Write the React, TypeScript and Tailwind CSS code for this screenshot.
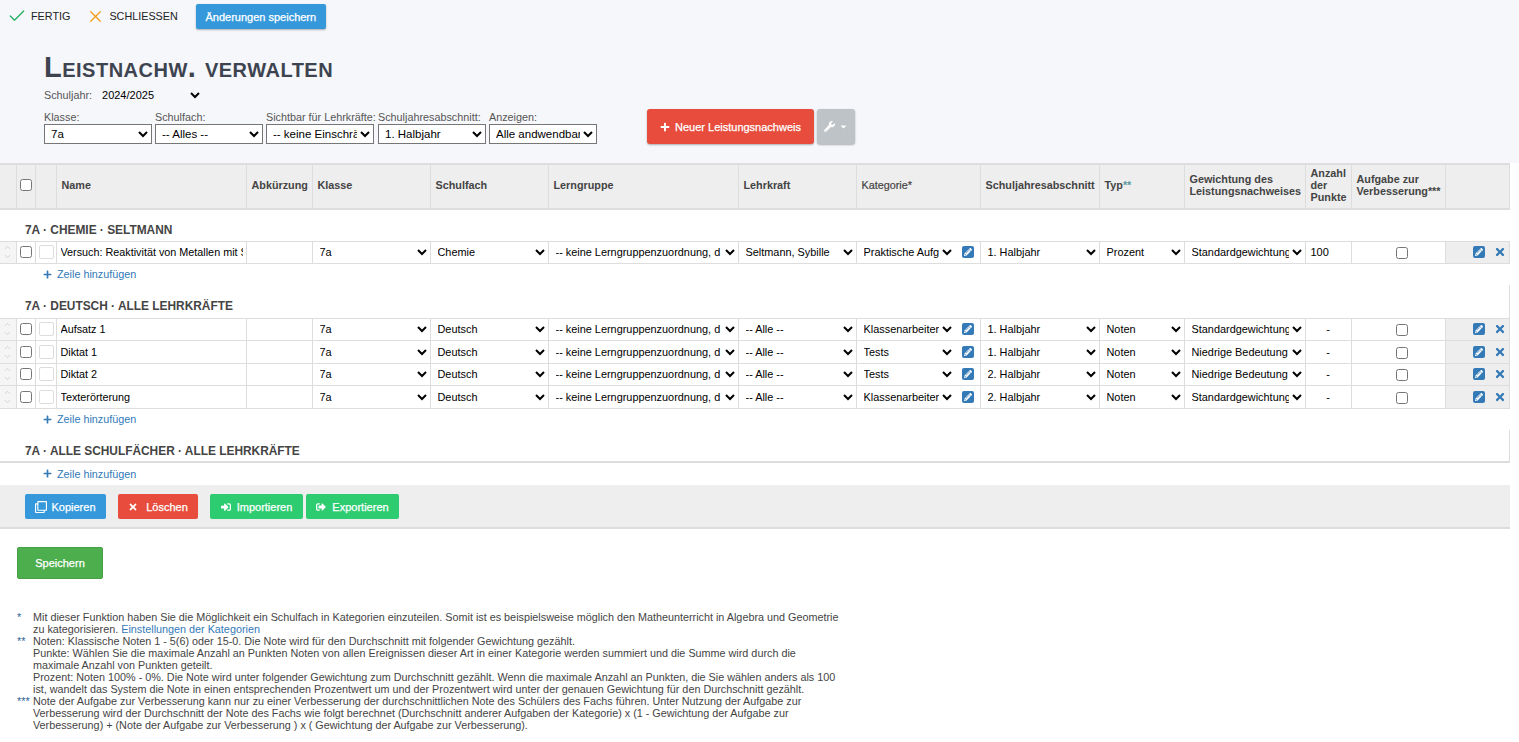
import React from "react";
import { Check, X, ChevronUp, ChevronDown } from "lucide-react";
import { FaPlus, FaWrench, FaTimes, FaSignInAlt, FaSignOutAlt, FaRegClone, FaPencilAlt, FaCaretDown } from "react-icons/fa";

const FONT = "font-['Liberation_Sans',Arial,sans-serif]";

const widths = [16, 19, 21, 190, 66, 118, 118, 190, 118, 124, 119, 85, 121, 46, 94, 64];

const headers: { label: React.ReactNode; cls?: string }[] = [
  { label: "" },
  { label: <input type="checkbox" className="block w-[12px] h-[12px] m-0 -ml-[2px]" /> },
  { label: "" },
  { label: "Name", cls: "font-bold" },
  { label: "Abkürzung", cls: "font-bold" },
  { label: "Klasse", cls: "font-bold" },
  { label: "Schulfach", cls: "font-bold" },
  { label: "Lerngruppe", cls: "font-bold" },
  { label: "Lehrkraft", cls: "font-bold" },
  { label: "Kategorie*", cls: "font-normal [-webkit-text-stroke:0.2px_#444]" },
  { label: "Schuljahresabschnitt", cls: "font-bold" },
  { label: <>Typ<span className="text-[#5b9aa0]">**</span></>, cls: "font-bold" },
  { label: <>Gewichtung des Leistungsnachweises</>, cls: "font-bold" },
  { label: <>Anzahl der Punkte</>, cls: "font-bold" },
  { label: <>Aufgabe zur Verbesserung***</>, cls: "font-bold" },
  { label: "" },
];

type Row = {
  name: string;
  fach: string;
  lehrkraft: string;
  kategorie: string;
  halbjahr: string;
  typ: string;
  gewichtung: string;
  punkte: string;
};

const chemie: Row[] = [
  { name: "Versuch: Reaktivität von Metallen mit Säuren", fach: "Chemie", lehrkraft: "Seltmann, Sybille", kategorie: "Praktische Aufgaben", halbjahr: "1. Halbjahr", typ: "Prozent", gewichtung: "Standardgewichtung", punkte: "100" },
];

const deutsch: Row[] = [
  { name: "Aufsatz 1", fach: "Deutsch", lehrkraft: "-- Alle --", kategorie: "Klassenarbeiten", halbjahr: "1. Halbjahr", typ: "Noten", gewichtung: "Standardgewichtung", punkte: "-" },
  { name: "Diktat 1", fach: "Deutsch", lehrkraft: "-- Alle --", kategorie: "Tests", halbjahr: "1. Halbjahr", typ: "Noten", gewichtung: "Niedrige Bedeutung", punkte: "-" },
  { name: "Diktat 2", fach: "Deutsch", lehrkraft: "-- Alle --", kategorie: "Tests", halbjahr: "2. Halbjahr", typ: "Noten", gewichtung: "Niedrige Bedeutung", punkte: "-" },
  { name: "Texterörterung", fach: "Deutsch", lehrkraft: "-- Alle --", kategorie: "Klassenarbeiten", halbjahr: "2. Halbjahr", typ: "Noten", gewichtung: "Standardgewichtung", punkte: "-" },
];

const CellSelect = ({ value }: { value: string }) => (
  <select
    defaultValue={value}
    className={`block w-full h-[20px] bg-transparent text-[10.9px] text-black outline-none border-0 ${FONT}`}
  >
    <option>{value}</option>
  </select>
);

const TopSelect = ({ label, value }: { label: string; value: string }) => (
  <div className="flex flex-col w-[108px]">
    <label className="text-[10.8px] leading-[12px] text-[#555] whitespace-nowrap h-[12px]">{label}</label>
    <select defaultValue={value} className="w-[108px] h-[20px] mt-[1px] border border-[#767676] bg-white text-[11.5px] text-black pl-[2px]">
      <option>{value}</option>
    </select>
  </div>
);

const AddRow = () => (
  <tr>
    <td colSpan={16} className="h-[22px] p-0 pl-[43px] align-middle">
      <span className="inline-flex items-center gap-[5px] text-[10.8px] leading-[14px] text-[#337ab7]">
        <FaPlus className="text-[#337ab7] w-[9px] h-[9px]" />
        Zeile hinzufügen
      </span>
    </td>
  </tr>
);

const SectionHead = ({ title, rowCls, pad, border }: { title: string; rowCls: string; pad: string; border?: boolean }) => (
  <tr>
    <td colSpan={16} className={`p-0 pl-[25px] align-bottom ${rowCls} ${border ? "border-r border-[#ddd]" : ""}`}>
      <div className={`text-[11.9px] font-bold leading-[14px] text-[#444] ${pad}`}>{title}</div>
    </td>
  </tr>
);

const PencilBox = () => (
  <span className="w-[12px] h-[12px] shrink-0 rounded-[2px] bg-[#337ab7] flex items-center justify-center">
    <FaPencilAlt className="w-[8px] h-[8px] text-white" />
  </span>
);

const TableRow = ({ row, rowCls }: { row: Row; rowCls: string }) => {
  const td = "p-0 pl-[3px] border-r border-t border-b border-[#ddd] align-middle";
  return (
    <tr className={rowCls}>
      <td className="p-0 border-r border-t border-b border-[#ddd] bg-[#f5f5f5] text-center">
        <div className="flex flex-col items-center text-[#bbb] leading-none">
          <ChevronUp size={9} strokeWidth={1.5} />
          <ChevronDown size={9} strokeWidth={1.5} />
        </div>
      </td>
      <td className={td}>
        <input type="checkbox" className="block w-[12px] h-[12px] m-0" />
      </td>
      <td className={td}>
        <div className="w-[15px] h-[14px] border border-[#ddd] rounded-[2px] bg-white" />
      </td>
      <td className="p-0 border-r border-t border-b border-[#ddd]">
        <input
          readOnly
          defaultValue={row.name}
          className="block w-full h-[20px] pl-[4px] pr-[3px] bg-transparent text-[10.8px] text-black outline-none"
        />
      </td>
      <td className={td} />
      <td className={td}><CellSelect value="7a" /></td>
      <td className={td}><CellSelect value={row.fach} /></td>
      <td className={td}><CellSelect value="-- keine Lerngruppenzuordnung, d" /></td>
      <td className={td}><CellSelect value={row.lehrkraft} /></td>
      <td className={td}>
        <div className="flex items-center">
          <div className="w-[95px] shrink-0"><CellSelect value={row.kategorie} /></div>
          <span className="ml-[7px]"><PencilBox /></span>
        </div>
      </td>
      <td className={td}><CellSelect value={row.halbjahr} /></td>
      <td className={td}><CellSelect value={row.typ} /></td>
      <td className={td}><CellSelect value={row.gewichtung} /></td>
      <td className={`p-0 border-r border-t border-b border-[#ddd] text-[11px] text-black ${row.punkte === "-" ? "text-center" : "pl-[5px]"}`}>{row.punkte}</td>
      <td className="p-0 pl-[8px] border-r border-t border-b border-[#ddd] align-middle text-center">
        <input type="checkbox" className="inline-block align-middle w-[12px] h-[12px] m-0" />
      </td>
      <td className="p-0 border-r border-t border-b border-[#ddd] bg-[#eee]">
        <div className="flex items-center justify-end gap-[9px] pr-[3px]">
          <PencilBox />
          <FaTimes className="w-[12px] h-[12px] text-[#337ab7]" />
        </div>
      </td>
    </tr>
  );
};

const FootButton = ({ color, icon, label, width, gap }: { color: string; icon: React.ReactNode; label: string; width: string; gap: string }) => (
  <button className={`${color} ${width} ${gap} h-[25px] rounded-[2px] text-white text-[11px] [-webkit-text-stroke:0.25px_white] flex items-center justify-center`}>
    {icon}
    {label}
  </button>
);

const Note = ({ mark, children }: { mark: string; children: React.ReactNode }) => (
  <div className="flex">
    <div className="w-[16px] shrink-0 text-[#2a6496]">{mark}</div>
    <div className="flex-1">{children}</div>
  </div>
);

export default function App() {
  return (
    <div className={`${FONT} bg-white h-[742px] w-[1519px] overflow-hidden text-[#333] text-[11px] leading-[14px]`}>
      {/* top area */}
      <div className="bg-[#f5f7fa] h-[163px]">
        <div className="flex items-start pt-[4px] pl-[7px]">
          <div className="flex items-center h-[24px] text-[10.8px] text-[#222]">
            <Check size={20} strokeWidth={1.6} className="text-[#27ae60]" />
            <span className="ml-[4px]">FERTIG</span>
            <X size={19} strokeWidth={1.6} className="text-[#f39c12] ml-[16px]" />
            <span className="ml-[4px]">SCHLIESSEN</span>
          </div>
          <button className="ml-[18px] w-[130px] h-[25px] rounded-[2px] bg-[#3498db] text-white text-[11px] [-webkit-text-stroke:0.25px_white] shadow-[0_1px_2px_rgba(0,0,0,0.3)]">
            Änderungen speichern
          </button>
        </div>

        <div className="pl-[44px]">
          <h1 className="mt-[23px] text-[29px] leading-[30px] font-bold text-[#3d4450] [font-variant:small-caps] tracking-[0.5px]">
            Leistnachw. verwalten
          </h1>
          <div className="flex items-center h-[17px] mt-[4px] text-[10.8px] text-[#555]">
            <span>Schuljahr:</span>
            <select defaultValue="2024/2025" className="ml-[6px] w-[105px] bg-transparent text-[11px] text-black outline-none">
              <option>2024/2025</option>
            </select>
          </div>
          <div className="flex items-start mt-[7px]">
            <div className="flex gap-[3px] pt-[1px]">
              <TopSelect label="Klasse:" value="7a" />
              <TopSelect label="Schulfach:" value="-- Alles --" />
              <TopSelect label="Sichtbar für Lehrkräfte:" value="-- keine Einschränkung" />
              <div className="ml-[1px]">
                <TopSelect label="Schuljahresabschnitt:" value="1. Halbjahr" />
              </div>
              <TopSelect label="Anzeigen:" value="Alle andwendbaren" />
            </div>
            <button className="ml-[50px] mt-[-1px] w-[167px] h-[35px] rounded-[3px] bg-[#e74c3c] text-white text-[11px] [-webkit-text-stroke:0.25px_white] flex items-center justify-center gap-[5px] shadow-[0_1px_2px_rgba(0,0,0,0.3)]">
              <FaPlus className="w-[10px] h-[10px]" />
              Neuer Leistungsnachweis
            </button>
            <button className="ml-[3px] mt-[-1px] w-[38px] h-[35px] rounded-[3px] bg-[#bdc3c7] text-white flex items-center justify-center gap-[4px] shadow-[0_1px_2px_rgba(0,0,0,0.3)]">
              <FaWrench className="w-[11px] h-[11px]" />
              <FaCaretDown className="w-[9px] h-[9px]" />
            </button>
          </div>
        </div>
      </div>

      {/* table */}
      <table className="table-fixed border-collapse w-[1509px]">
        <colgroup>
          {widths.map((w, i) => (
            <col key={i} style={{ width: w }} />
          ))}
        </colgroup>
        <thead>
          <tr className="h-[45px] bg-[#eee]">
            {headers.map((h, i) => (
              <th
                key={i}
                className={`p-0 pl-[5px] pb-[4px] text-left text-[10.8px] leading-[12px] text-[#444] border-t-2 border-b-2 border-r border-[#ddd] ${h.cls ?? ""}`}
              >
                {h.label}
              </th>
            ))}
          </tr>
        </thead>
        <tbody>
          <SectionHead title="7A · CHEMIE · SELTMANN" rowCls="h-[32px]" pad="pb-[4px]" />
          {chemie.map((r) => (
            <TableRow key={r.name} row={r} rowCls="h-[22px]" />
          ))}
          <AddRow />
          <SectionHead title="7A · DEUTSCH · ALLE LEHRKRÄFTE" rowCls="h-[33px]" pad="pb-[5px]" border />
          {deutsch.map((r) => (
            <TableRow key={r.name} row={r} rowCls="h-[22.5px]" />
          ))}
          <AddRow />
          <SectionHead title="7A · ALLE SCHULFÄCHER · ALLE LEHRKRÄFTE" rowCls="h-[32px]" pad="pb-[3px]" border />
          <tr><td colSpan={16} className="p-0 h-0 border-t-2 border-[#ddd]" /></tr>
          <AddRow />
        </tbody>
      </table>

      {/* action bar */}
      <div className="w-[1510px] h-[44px] bg-[#eee] border-b-2 border-[#ddd] flex items-start pt-[9px] pl-[25px]">
        <FootButton color="bg-[#3498db]" width="w-[81px]" gap="gap-[4px]" label="Kopieren" icon={<FaRegClone className="w-[12px] h-[12px]" />} />
        <div className="w-[12px]" />
        <FootButton color="bg-[#e74c3c]" width="w-[80px]" gap="gap-[8px]" label="Löschen" icon={<FaTimes className="w-[10px] h-[10px]" />} />
        <div className="w-[12px]" />
        <FootButton color="bg-[#2ecc71]" width="w-[93px]" gap="gap-[6px]" label="Importieren" icon={<FaSignInAlt className="w-[10px] h-[10px]" />} />
        <div className="w-[3px]" />
        <FootButton color="bg-[#2ecc71]" width="w-[93px]" gap="gap-[6px]" label="Exportieren" icon={<FaSignOutAlt className="w-[10px] h-[10px]" />} />
      </div>

      <div className="pl-[17px] pt-[18px]">
        <button className="w-[86px] h-[32px] rounded-[2px] bg-[#4cae4c] border border-[#46a046] text-white text-[11px] [-webkit-text-stroke:0.25px_white]">
          Speichern
        </button>
      </div>

      <div className="mt-[32px] ml-[17px] w-[823px] text-[10.8px] leading-[12px] text-[#444]">
        <Note mark="*">
          Mit dieser Funktion haben Sie die Möglichkeit ein Schulfach in Kategorien einzuteilen. Somit ist es beispielsweise möglich den Matheunterricht in Algebra und Geometrie zu kategorisieren. <span className="text-[#337ab7]">Einstellungen der Kategorien</span>
        </Note>
        <Note mark="**">
          Noten: Klassische Noten 1 - 5(6) oder 15-0. Die Note wird für den Durchschnitt mit folgender Gewichtung gezählt.
          <br />
          Punkte: Wählen Sie die maximale Anzahl an Punkten Noten von allen Ereignissen dieser Art in einer Kategorie werden summiert und die Summe wird durch die maximale Anzahl von Punkten geteilt.
          <br />
          Prozent: Noten 100% - 0%. Die Note wird unter folgender Gewichtung zum Durchschnitt gezählt. Wenn die maximale Anzahl an Punkten, die Sie wählen anders als 100 ist, wandelt das System die Note in einen entsprechenden Prozentwert um und der Prozentwert wird unter der genauen Gewichtung für den Durchschnitt gezählt.
        </Note>
        <Note mark="***">
          Note der Aufgabe zur Verbesserung kann nur zu einer Verbesserung der durchschnittlichen Note des Schülers des Fachs führen. Unter Nutzung der Aufgabe zur Verbesserung wird der Durchschnitt der Note des Fachs wie folgt berechnet (Durchschnitt anderer Aufgaben der Kategorie) x (1 - Gewichtung der Aufgabe zur Verbesserung) + (Note der Aufgabe zur Verbesserung ) x ( Gewichtung der Aufgabe zur Verbesserung).
        </Note>
      </div>
    </div>
  );
}
